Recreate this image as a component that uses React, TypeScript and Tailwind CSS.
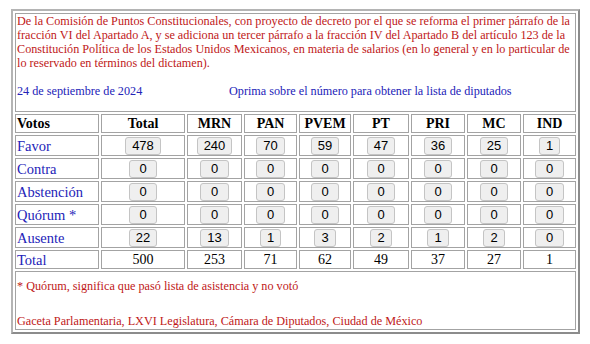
const serif = "font-['Liberation_Serif','Times_New_Roman',serif]";

const parties = ["MRN", "PAN", "PVEM", "PT", "PRI", "MC", "IND"];
const colWidths = [84, 84, 55, 53, 52, 56, 54, 54, 53];

const rows: { label: string; values: number[] }[] = [
  { label: "Favor", values: [478, 240, 70, 59, 47, 36, 25, 1] },
  { label: "Contra", values: [0, 0, 0, 0, 0, 0, 0, 0] },
  { label: "Abstención", values: [0, 0, 0, 0, 0, 0, 0, 0] },
  { label: "Quórum *", values: [0, 0, 0, 0, 0, 0, 0, 0] },
  { label: "Ausente", values: [22, 13, 1, 3, 2, 1, 2, 0] },
];
const totals = [500, 253, 71, 62, 49, 37, 27, 1];

const cell = "border border-[#a3a3a3] p-0";

function VoteButton({ n }: { n: number }) {
  return (
    <button className="block mx-auto h-[18px] px-[6px] bg-[#efefef] border border-[#c4c4c4] rounded-[3px] font-['Liberation_Sans',Arial,sans-serif] text-[13px] leading-[15px] text-black">
      {n === 0 ? "\u00a00\u00a0" : n}
    </button>
  );
}

export default function App() {
  return (
    <div className="bg-white w-[590px] h-[344px] pt-[9px] pl-[11px]">
      <table
        className={`${serif} table-fixed w-[569px] leading-[16px] border-separate border-spacing-[2px] border-2 border-t-[#b4b4b4] border-l-[#b4b4b4] border-r-[#8c8c8c] border-b-[#8c8c8c]`}
      >
        <colgroup>
          {colWidths.map((w, i) => (
            <col key={i} style={{ width: w }} />
          ))}
        </colgroup>
        <tbody>
          <tr>
            <td colSpan={9} className={`${cell} p-[1px] align-top text-[12.2px] leading-[13.9px]`}>
              <p className="text-[#c01818]">
                De la Comisión de Puntos Constitucionales, con proyecto de decreto por el que se reforma el
                primer párrafo de la fracción VI del Apartado A, y se adiciona un tercer párrafo a la fracción
                IV del Apartado B del artículo 123 de la Constitución Política de los Estados Unidos
                Mexicanos, en materia de salarios (en lo general y en lo particular de lo reservado en
                términos del dictamen).
              </p>
              <p className="mt-[13.9px] mb-[12px] text-[#2323b8]">
                <span className="inline-block w-[212px]">24 de septiembre de 2024</span>
                <span>Oprima sobre el número para obtener la lista de diputados</span>
              </p>
            </td>
          </tr>
          <tr className="h-[19px] text-[14px] font-bold text-black">
            <td className={`${cell} px-[1px] text-left`}>Votos</td>
            <td className={`${cell} text-center`}>Total</td>
            {parties.map((p) => (
              <td key={p} className={`${cell} text-center`}>
                {p}
              </td>
            ))}
          </tr>
          {rows.map((r) => (
            <tr key={r.label} className="h-[21px]">
              <td className={`${cell} px-[1px] text-[14.5px] text-[#2323b8] align-middle`}>{r.label}</td>
              {r.values.map((v, i) => (
                <td key={i} className={`${cell} align-middle`}>
                  <VoteButton n={v} />
                </td>
              ))}
            </tr>
          ))}
          <tr className="h-[19px] text-[14px]">
            <td className={`${cell} px-[1px] text-[14.5px] text-[#2323b8]`}>Total</td>
            {totals.map((t, i) => (
              <td key={i} className={`${cell} text-center text-black`}>
                {t}
              </td>
            ))}
          </tr>
          <tr>
            <td colSpan={9} className={`${cell} h-[59px] px-[1px] align-top text-[12.2px] leading-[13.9px] text-[#c01818]`}>
              <p className="mt-[8px]">* Quórum, significa que pasó lista de asistencia y no votó</p>
              <p className="mt-[21px]">Gaceta Parlamentaria, LXVI Legislatura, Cámara de Diputados, Ciudad de México</p>
            </td>
          </tr>
        </tbody>
      </table>
    </div>
  );
}
